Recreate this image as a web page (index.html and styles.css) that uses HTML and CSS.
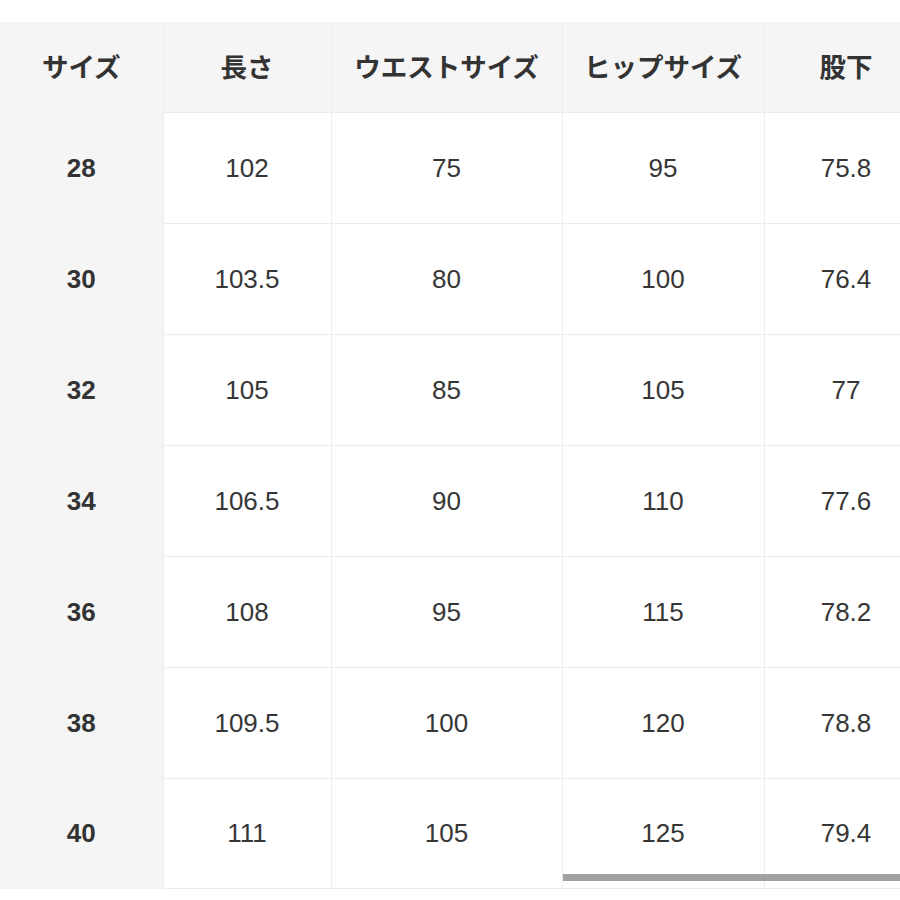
FILE: index.html
```html
<!DOCTYPE html>
<html lang="ja">
<head>
<meta charset="utf-8">
<link rel="stylesheet" href="styles.css">
</head>
<body>
<div class="wrap">
  <table class="size-table">
    <colgroup>
      <col class="c1"><col class="c2"><col class="c3"><col class="c4"><col class="c5">
    </colgroup>
    <thead>
      <tr>
        <th class="first">サイズ</th>
        <th>長さ</th>
        <th>ウエストサイズ</th>
        <th>ヒップサイズ</th>
        <th>股下</th>
      </tr>
    </thead>
    <tbody>
      <tr><th class="first">28</th><td>102</td><td>75</td><td>95</td><td>75.8</td></tr>
      <tr><th class="first">30</th><td>103.5</td><td>80</td><td>100</td><td>76.4</td></tr>
      <tr><th class="first">32</th><td>105</td><td>85</td><td>105</td><td>77</td></tr>
      <tr><th class="first">34</th><td>106.5</td><td>90</td><td>110</td><td>77.6</td></tr>
      <tr><th class="first">36</th><td>108</td><td>95</td><td>115</td><td>78.2</td></tr>
      <tr><th class="first">38</th><td>109.5</td><td>100</td><td>120</td><td>78.8</td></tr>
      <tr class="last"><th class="first">40</th><td>111</td><td>105</td><td>125</td><td>79.4</td></tr>
    </tbody>
  </table>
  <div class="scrollbar"></div>
</div>
</body>
</html>
```
FILE: styles.css
```css
html, body {
  margin: 0;
  padding: 0;
  background: #ffffff;
}
body {
  font-family: "Liberation Sans", "Noto Sans CJK JP", sans-serif;
  color: #333333;
  overflow: hidden;
}
.wrap {
  position: relative;
  padding-top: 22px;
  width: 900px;
  overflow: hidden;
}
.size-table {
  border-collapse: collapse;
  table-layout: fixed;
  width: 928px;
}
.c1 { width: 163px; }
.c2 { width: 168px; }
.c3 { width: 231px; }
.c4 { width: 202px; }
.c5 { width: 164px; }

.size-table th,
.size-table td {
  padding: 0;
  text-align: center;
  vertical-align: middle;
  font-size: 26px;
  border-right: 1px solid #ececec;
  border-bottom: 1px solid #ececec;
}
.size-table thead th {
  height: 86px;
  background: #f5f5f5;
  font-family: "Noto Sans CJK JP", "Liberation Sans", sans-serif;
  font-size: 26.5px;
  font-weight: 700;
  color: #333333;
  padding-bottom: 4px;
}
.size-table tbody td,
.size-table tbody th {
  height: 110px;
  background: #ffffff;
}
.size-table tbody td {
  font-weight: 400;
  color: #363636;
}
.size-table .first {
  background: #f5f5f5;
  border-bottom: none;
  border-right: 1px solid #ebebeb;
}
.size-table tbody th.first {
  font-weight: 700;
  color: #333333;
}
.size-table tr.last td,
.size-table tr.last th {
  height: 109px;
}
.scrollbar {
  position: absolute;
  left: 563px;
  top: 874px;
  width: 337px;
  height: 7px;
  background: #a2a2a2;
}
```
